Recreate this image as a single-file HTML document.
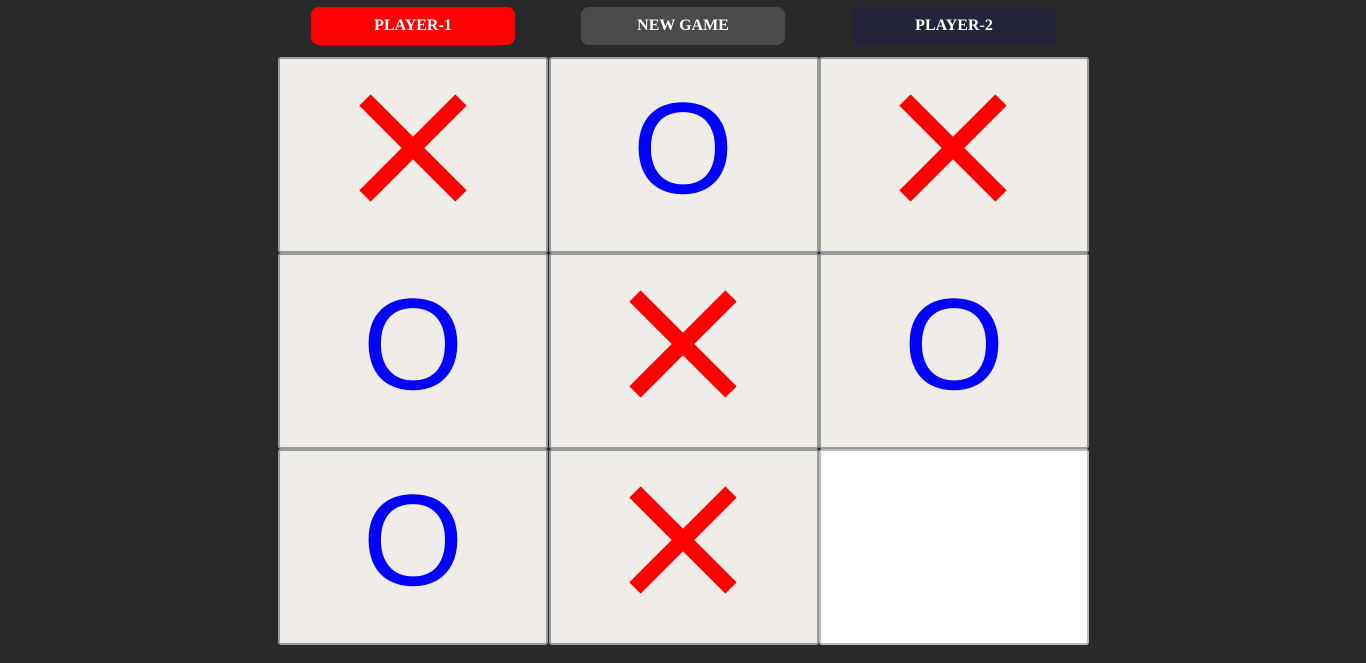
<!DOCTYPE html>
<html><head><style>
body{margin:0;background:#292929;width:1366px;height:663px;overflow:hidden;position:relative;font-family:"Liberation Serif",serif}
.btn{position:absolute;top:7px;width:204px;height:38px;border-radius:8px;color:#fff;font-weight:bold;font-size:16px;text-align:center;line-height:38px}
.c{position:absolute;width:266px;height:192px;background:#f0ede9;border:2px solid #9a9a9a;border-radius:3px;box-sizing:content-box}
.c svg{position:absolute;left:0;top:0}
</style></head><body>
<div class="btn" style="left:311px;background:#ff0000">PLAYER-1</div>
<div class="btn" style="left:581px;background:#4a4a4a">NEW GAME</div>
<div class="btn" style="left:852px;background:#23243a">PLAYER-2</div>
<div class="c" style="left:278px;top:57px"><svg width="266" height="192"><path d="M85 41L181 137M181 41L85 137" stroke="#f00" stroke-width="16"/></svg></div>
<div class="c" style="left:549px;top:57px"><svg width="266" height="192"><text x="132" y="134" font-family="Liberation Sans" font-size="130" fill="#00f" text-anchor="middle">O</text></svg></div>
<div class="c" style="left:819px;top:57px"><svg width="266" height="192"><path d="M84 41L180 137M180 41L84 137" stroke="#f00" stroke-width="16"/></svg></div>
<div class="c" style="left:278px;top:253px"><svg width="266" height="192"><text x="133" y="134" font-family="Liberation Sans" font-size="130" fill="#00f" text-anchor="middle">O</text></svg></div>
<div class="c" style="left:549px;top:253px"><svg width="266" height="192"><path d="M84 41L180 137M180 41L84 137" stroke="#f00" stroke-width="16"/></svg></div>
<div class="c" style="left:819px;top:253px"><svg width="266" height="192"><text x="133" y="134" font-family="Liberation Sans" font-size="130" fill="#00f" text-anchor="middle">O</text></svg></div>
<div class="c" style="left:278px;top:449px"><svg width="266" height="192"><text x="133" y="134" font-family="Liberation Sans" font-size="130" fill="#00f" text-anchor="middle">O</text></svg></div>
<div class="c" style="left:549px;top:449px"><svg width="266" height="192"><path d="M84 41L180 137M180 41L84 137" stroke="#f00" stroke-width="16"/></svg></div>
<div class="c" style="left:819px;top:449px;background:#fff;border-color:#bbb"></div>
</body></html>
